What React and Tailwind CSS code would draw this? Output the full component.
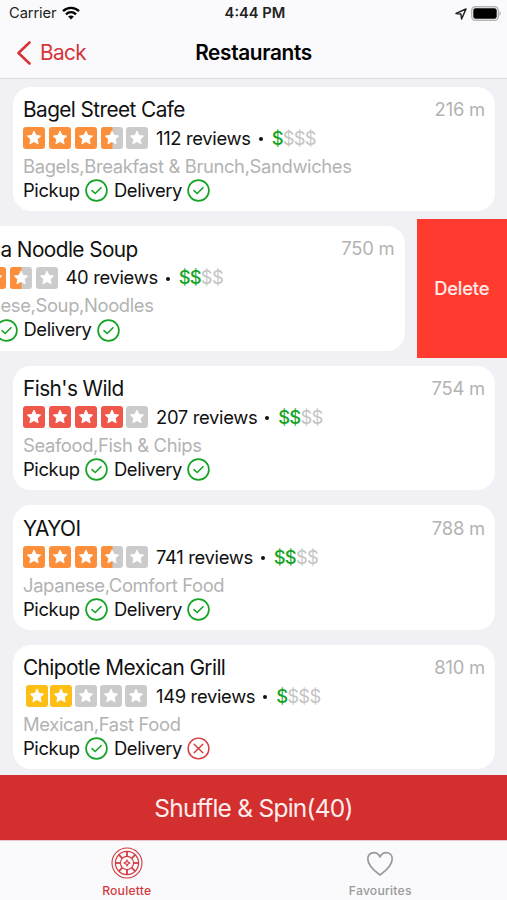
// src/App.jsx
const restaurants = [
  {
    name: 'Bagel Street Cafe',
    distance: '216 m',
    rating: 3.5,
    reviews: 112,
    price: 1,
    categories: 'Bagels,Breakfast & Brunch,Sandwiches',
    pickup: true,
    delivery: true,
  },
  {
    name: 'a Noodle Soup',
    distance: '750 m',
    rating: 3.5,
    reviews: 40,
    price: 2,
    categories: 'ese,Soup,Noodles',
    pickup: true,
    delivery: true,
    swiped: true,
  },
  {
    name: "Fish's Wild",
    distance: '754 m',
    rating: 4,
    reviews: 207,
    price: 2,
    categories: 'Seafood,Fish & Chips',
    pickup: true,
    delivery: true,
  },
  {
    name: 'YAYOI',
    distance: '788 m',
    rating: 3.5,
    reviews: 741,
    price: 2,
    categories: 'Japanese,Comfort Food',
    pickup: true,
    delivery: true,
  },
  {
    name: 'Chipotle Mexican Grill',
    distance: '810 m',
    rating: 2,
    reviews: 149,
    price: 1,
    categories: 'Mexican,Fast Food',
    pickup: true,
    delivery: false,
  },
];

function starColor(rating) {
  if (rating >= 4) return '#f0574b';
  if (rating >= 3) return '#fc8f3c';
  return '#fdbf13';
}

function Star({ fill, color }) {
  return (
    <svg viewBox="0 0 22 22" className="h-[22px] w-[22px] shrink-0">
      <rect width="22" height="22" rx="3" fill={fill === 1 ? color : '#cbcbcb'} />
      {fill === 0.5 && <path d="M3 0H11.5V22H3A3 3 0 0 1 0 19V3A3 3 0 0 1 3 0Z" fill={color} />}
      <path
        d="M11 4.1L13 8.4L17.6 9L14.2 12.2L15.1 16.8L11 14.5L6.9 16.8L7.8 12.2L4.4 9L9 8.4Z"
        fill="#fff"
        stroke="#fff"
        strokeWidth="1"
        strokeLinejoin="round"
      />
    </svg>
  );
}

function Stars({ rating }) {
  const color = starColor(rating);
  return (
    <div
      className={
        rating < 3
          ? 'flex w-[133px] gap-[2.8px] pl-[2.5px]'
          : 'flex w-[133px] gap-[3.8px] pl-[0.3px]'
      }
    >
      {[0, 1, 2, 3, 4].map((i) => (
        <Star key={i} color={color} fill={Math.max(0, Math.min(1, rating - i))} />
      ))}
    </div>
  );
}

function Status({ ok }) {
  return (
    <svg viewBox="0 0 23 23" className="h-[23px] w-[23px] shrink-0" fill="none" stroke={ok ? '#17a326' : '#d6393b'}>
      <circle cx="11.5" cy="11.5" r="10.4" strokeWidth={ok ? 1.7 : 1.4} />
      {ok ? (
        <path d="M7 11.7L10.2 14.5L16 8.7" strokeWidth="1.6" strokeLinecap="round" />
      ) : (
        <path d="M7.2 7.2L15.8 15.8M15.8 7.2L7.2 15.8" strokeWidth="1.4" strokeLinecap="round" />
      )}
    </svg>
  );
}

function Card({ item }) {
  return (
    <div className="flex h-[124.5px] w-[482px] shrink-0 flex-col rounded-[18px] bg-white pt-[10px] pr-[10px] pl-[10px]">
      <div className="flex h-[26px] items-center justify-between">
        <span className={`text-[20.8px] tracking-[-0.58px] text-[#111] ${item.swiped ? 'pl-[68px]' : ''}`}>
          {item.name}
        </span>
        <span className="text-[18.4px] tracking-[-0.2px] text-[#b3b3b3]">{item.distance}</span>
      </div>
      <div className="mt-[3px] flex h-[25px] items-center text-[18.4px] tracking-[-0.33px] text-[#111]">
        <Stars rating={item.rating} />
        <span className="pt-px">{item.reviews} reviews</span>
        <span className="mt-[2px] mr-[9px] ml-[8px] h-[4px] w-[4px] rounded-full bg-[#111]" />
        <span className="pt-px font-medium tracking-[-0.85px] text-[#17a326]">{'$'.repeat(item.price)}</span>
        <span className="pt-px tracking-[-0.7px] text-[#c4c4c4]">{'$'.repeat(4 - item.price)}</span>
      </div>
      <div
        className={`mt-[4px] flex h-[24px] items-center text-[18.4px] tracking-[-0.36px] text-[#b3b3b3] ${
          item.swiped ? 'pl-[68px]' : ''
        }`}
      >
        {item.categories}
      </div>
      <div className="flex h-[24px] items-center text-[18.4px] tracking-[-0.4px] text-[#111]">
        <span className="w-[62px]">{!item.swiped && 'Pickup'}</span>
        <Status ok={item.pickup} />
        <span className="ml-[6px] w-[73px]">Delivery</span>
        <Status ok={item.delivery} />
      </div>
    </div>
  );
}

function Row({ item }) {
  if (item.swiped) {
    return (
      <div className="flex h-[139.6px] shrink-0 items-center justify-end">
        <Card item={item} />
        <button className="ml-[12px] h-full w-[90.5px] shrink-0 bg-[#ff3b30] pt-px text-[18.4px] font-medium tracking-[-0.2px] text-white/90">
          Delete
        </button>
      </div>
    );
  }
  return (
    <div className="flex h-[139.6px] shrink-0 items-center pl-[13px]">
      <Card item={item} />
    </div>
  );
}

function StatusBar() {
  return (
    <div className="grid h-[27px] grid-cols-3 items-center pr-[6px] pl-[9px] text-[14.7px] text-[#222]">
      <div className="flex items-center gap-[6px]">
        <span className="tracking-[-0.1px]">Carrier</span>
        <svg viewBox="0 0 18 14" className="h-[14px] w-[18px]" fill="none" stroke="#000" strokeWidth="2.4">
          <path d="M1 5.2C5.5 0.8 12.5 0.8 17 5.2" />
          <path d="M4 8.3C7 5.6 11 5.6 14 8.3" />
          <path d="M9 13.5L6.1 10.5C7.8 9.1 10.2 9.1 11.9 10.5Z" fill="#000" stroke="none" />
        </svg>
      </div>
      <span className="text-center font-semibold">4:44 PM</span>
      <div className="flex items-center justify-end gap-[4px]">
        <svg viewBox="0 0 12 12" className="h-[12px] w-[12px]" fill="none" stroke="#222" strokeWidth="1.5" strokeLinejoin="round">
          <path d="M11 1L1 5.4L5.9 6.1L6.6 11Z" />
        </svg>
        <svg viewBox="0 0 30 15" className="h-[15px] w-[30px]">
          <rect x="0.7" y="0.7" width="26.6" height="13.6" rx="3.8" fill="#fafafc" stroke="#b4b4b4" strokeWidth="1.4" />
          <rect x="2.3" y="2.3" width="23.4" height="10.4" rx="2.2" fill="#000" />
          <path d="M28.4 5C30.3 5.8 30.3 9.2 28.4 10Z" fill="#b4b4b4" />
        </svg>
      </div>
    </div>
  );
}

function RouletteIcon() {
  const spokes = [0, 45, 90, 135, 180, 225, 270, 315];
  return (
    <svg viewBox="0 0 32 32" className="h-[32px] w-[32px]" fill="none" stroke="#d33b40" strokeWidth="1.1">
      <circle cx="16" cy="16" r="15" />
      <circle cx="16" cy="16" r="11.6" strokeWidth="1.2" />
      <circle cx="16" cy="16" r="6.6" />
      {spokes.map((a) => (
        <path key={a} d="M16 9.4V4.6" strokeWidth="1.8" transform={`rotate(${a} 16 16)`} />
      ))}
      <path d="M16 13.2L17 15L18.8 16L17 17L16 18.8L15 17L13.2 16L15 15Z" />
    </svg>
  );
}

function App() {
  return (
    <div className="flex h-[900px] w-[507px] flex-col overflow-hidden bg-[#f1f0f5] font-['Inter',sans-serif] whitespace-nowrap">
      {/* Header */}
      <header className="h-[79px] shrink-0 border-b border-[#dcdce0] bg-[#fafafc]">
        <StatusBar />
        <div className="grid h-[51px] grid-cols-3 items-center px-[16px]">
          <button className="flex items-center gap-[9px] text-[20.8px] tracking-[-0.6px] text-[#d33539]">
            <svg viewBox="0 0 15 24" className="h-[24px] w-[15px]" fill="none" stroke="currentColor" strokeWidth="2.6">
              <path d="M13.5 1.5L2.5 12L13.5 22.5" strokeLinecap="round" strokeLinejoin="round" />
            </svg>
            Back
          </button>
          <h1 className="text-center text-[20.8px] font-semibold tracking-[-0.35px] text-black">Restaurants</h1>
        </div>
      </header>

      {/* List */}
      <main className="flex h-[696px] shrink-0 flex-col overflow-hidden">
        {restaurants.map((item) => (
          <Row key={item.name} item={item} />
        ))}
      </main>

      <button className="h-[65px] shrink-0 bg-[#d32f2f] pt-[2px] text-[24.5px] tracking-[-0.75px] text-[#ffeeee]">
        Shuffle &amp; Spin(40)
      </button>

      {/* Tabs */}
      <nav className="grid flex-1 grid-cols-2 border-t border-[#e6c9cc] bg-[#fafafc] text-[12.2px] font-medium tracking-[0.2px]">
        <div className="flex flex-col items-center pt-[6px] text-[#d33b40]">
          <RouletteIcon />
          <span className="mt-[3px]">Roulette</span>
        </div>
        <div className="flex flex-col items-center pt-[6px] text-[#999]">
          <svg viewBox="0 0 28 32" className="h-[32px] w-[28px]" fill="none" stroke="currentColor" strokeWidth="1.7">
            <path d="M14 28C9 24.4 1.8 18.4 1.8 12C1.8 8.2 4.3 5.6 7.7 5.6C10.6 5.6 12.9 7.3 14 10C15.1 7.3 17.4 5.6 20.3 5.6C23.7 5.6 26.2 8.2 26.2 12C26.2 18.4 19 24.4 14 28Z" strokeLinejoin="round" />
          </svg>
          <span className="mt-[3px]">Favourites</span>
        </div>
      </nav>
    </div>
  );
}

export default App;
